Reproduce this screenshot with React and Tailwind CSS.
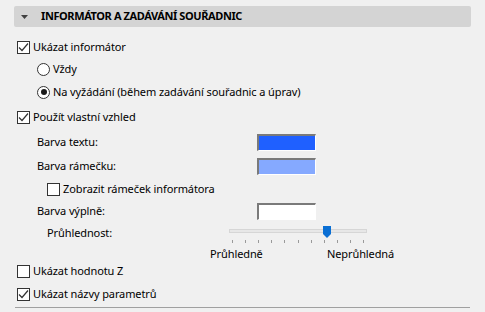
import React from "react";

const font = { fontFamily: '"Noto Sans", "Open Sans", sans-serif' };

function Check({ checked }) {
  return (
    <div className="w-[13px] h-[13px] border border-[#333333] bg-white flex items-center justify-center shrink-0">
      {checked && (
        <svg width="11" height="11" viewBox="0 0 11 11">
          <path d="M1 5.5 L4 8.5 L10 1.5" fill="none" stroke="#333333" strokeWidth="1.2" />
        </svg>
      )}
    </div>
  );
}

function Radio({ checked }) {
  return (
    <div className="w-[13px] h-[13px] rounded-full border border-[#333333] bg-white flex items-center justify-center shrink-0">
      {checked && <div className="w-[6px] h-[6px] rounded-full bg-[#1a1a1a]" />}
    </div>
  );
}

function Swatch({ color }) {
  return (
    <div className="w-[59px] h-[17px] border-t-2 border-l-2 border-t-[#7a7a7a] border-l-[#7a7a7a] border-b border-r border-b-white border-r-white">
      <div className={`w-full h-full ${color}`} />
    </div>
  );
}

export default function App() {
  const ticks = Array.from({ length: 11 }, (_, i) => 3 + i * 13.1);
  return (
    <div className="w-[485px] h-[312px] bg-[#f0f0f0] text-[11px] tracking-[-0.1px] text-black overflow-hidden flex flex-col" style={font}>
      <div className="mt-[6px] mx-[14px] h-[21px] bg-[#d4d4d4] rounded-[2px] flex items-center">
        <svg width="7" height="4" viewBox="0 0 7 4" className="ml-[7px] mr-[13px]">
          <path d="M0 0 H7 L3.5 4 Z" fill="#404040" />
        </svg>
        <span className="font-bold text-[11px] tracking-[-0.4px]">INFORMÁTOR A ZADÁVÁNÍ SOUŘADNIC</span>
      </div>

      <div className="mt-[9px] h-[22px] pl-[17px] flex items-center gap-[3px]">
        <Check checked />
        <span>Ukázat informátor</span>
      </div>
      <div className="h-[22px] pl-[37px] flex items-center gap-[3px]">
        <Radio />
        <span>Vždy</span>
      </div>
      <div className="h-[24px] pl-[37px] flex items-center gap-[3px]">
        <Radio checked />
        <span>Na vyžádání (během zadávání souřadnic a úprav)</span>
      </div>
      <div className="h-[26px] pl-[17px] flex items-center gap-[3px]">
        <Check checked />
        <span>Použít vlastní vzhled</span>
      </div>
      <div className="h-[24px] pl-[37px] flex items-center">
        <span className="w-[220px]">Barva textu:</span>
        <Swatch color="bg-[#1f60ff]" />
      </div>
      <div className="h-[24px] pl-[37px] flex items-center">
        <span className="w-[220px]">Barva rámečku:</span>
        <Swatch color="bg-[#85a9ff]" />
      </div>
      <div className="h-[22px] pl-[47px] flex items-center gap-[3px]">
        <Check />
        <span>Zobrazit rámeček informátora</span>
      </div>
      <div className="h-[22px] pl-[37px] flex items-center">
        <span className="w-[220px]">Barva výplně:</span>
        <Swatch color="bg-white" />
      </div>
      <div className="h-[24px] pl-[47px] flex items-start">
        <span className="w-[182px] mt-[2px] leading-[18px]">Průhlednost:</span>
        <div className="relative w-[138px] h-[24px]">
          <div className="absolute left-0 top-[7px] w-[138px] h-[4px] bg-[#e7e7e7] border border-[#d6d6d6]" />
          <svg width="8" height="12" viewBox="0 0 8 12" className="absolute left-[94px] top-[4px]">
            <path d="M0 0 H8 V8 L4 12 L0 8 Z" fill="#0a6fd4" />
          </svg>
          <svg width="138" height="4" viewBox="0 0 138 4" className="absolute left-0 top-[18px]">
            {ticks.map((x, i) => (
              <rect key={i} x={Math.round(x)} y="0" width="1" height="3" fill="#9a9a9a" />
            ))}
          </svg>
        </div>
      </div>
      <div className="h-[16px] pl-[210px] flex items-center">
        <span className="w-[117px]">Průhledně</span>
        <span>Neprůhledná</span>
      </div>
      <div className="h-[18px] pl-[17px] flex items-center gap-[3px]">
        <Check />
        <span>Ukázat hodnotu Z</span>
      </div>
      <div className="mt-[3px] h-[22px] pl-[17px] flex items-center gap-[3px]">
        <Check checked />
        <span>Ukázat názvy parametrů</span>
      </div>
      <div className="mt-[2px] mx-[15px] h-px bg-[#a0a0a0]" />
    </div>
  );
}
